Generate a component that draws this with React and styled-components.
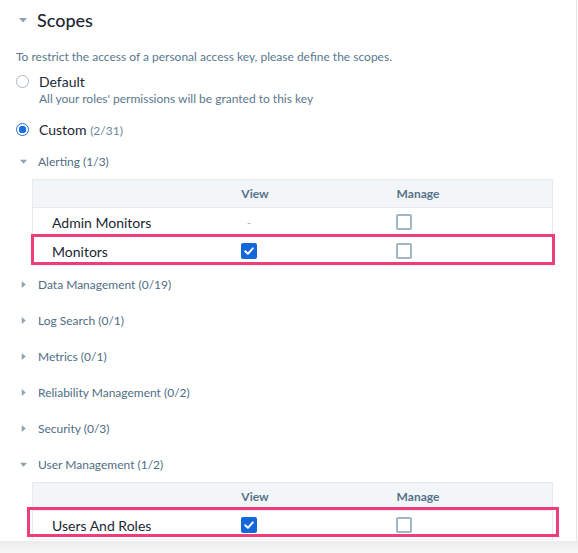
import React from "react";
import styled, { createGlobalStyle } from "styled-components";

const groups = [
  {
    name: "Alerting",
    count: "1/3",
    open: true,
    rows: [
      { name: "Admin Monitors", view: null, manage: false },
      { name: "Monitors", view: true, manage: false, marked: "a" },
    ],
  },
  { name: "Data Management", count: "0/19" },
  { name: "Log Search", count: "0/1" },
  { name: "Metrics", count: "0/1" },
  { name: "Reliability Management", count: "0/2" },
  { name: "Security", count: "0/3" },
  {
    name: "User Management",
    count: "1/2",
    open: true,
    rows: [{ name: "Users And Roles", view: true, manage: false, marked: "b" }],
  },
];

const Caret = ({ open, size = 7 }) => (
  <CaretBox>
    <svg width={size} height={size} viewBox="0 0 8 8">
      {open ? (
        <path d="M0 2 L8 2 L4 6.5 Z" fill="#8ea2b2" />
      ) : (
        <path d="M2 0 L6.5 4 L2 8 Z" fill="#8ea2b2" />
      )}
    </svg>
  </CaretBox>
);

const CheckBox = ({ checked }) =>
  checked ? (
    <Box checked>
      <svg width="12" height="12" viewBox="0 0 12 12">
        <path
          d="M2.2 6.2 L4.9 8.8 L9.8 3.4"
          stroke="#fff"
          strokeWidth="2"
          fill="none"
          strokeLinecap="round"
          strokeLinejoin="round"
        />
      </svg>
    </Box>
  ) : (
    <Box />
  );

const App = () => {
  return (
    <>
      <GlobalStyle />
      <Panel>
        <Title>
          <Caret open size={8} />
          <h2>Scopes</h2>
        </Title>
        <Description>
          To restrict the access of a personal access key, please define the
          scopes.
        </Description>

        <RadioRow>
          <Radio />
          <div>
            <RadioLabel>Default</RadioLabel>
            <RadioHint>All your roles' permissions will be granted to this key</RadioHint>
          </div>
        </RadioRow>
        <RadioRow custom>
          <Radio checked />
          <RadioLabel>
            Custom <Count>(2/31)</Count>
          </RadioLabel>
        </RadioRow>

        {groups.map((g) => (
          <React.Fragment key={g.name}>
            <GroupHeader>
              <Caret open={g.open} />
              <span>
                {g.name} ({g.count})
              </span>
            </GroupHeader>
            {g.open && (
              <Table>
                <HeadRow>
                  <span />
                  <HeadCell>View</HeadCell>
                  <HeadCell>Manage</HeadCell>
                  <span />
                </HeadRow>
                {g.rows.map((r) => (
                  <Row key={r.name} marked={r.marked}>
                    <NameCell>{r.name}</NameCell>
                    <Cell pad={12}>
                      {r.view === null ? <Dash>-</Dash> : <CheckBox checked={r.view} />}
                    </Cell>
                    <Cell pad={28}>
                      <CheckBox checked={r.manage} />
                    </Cell>
                    <span />
                  </Row>
                ))}
              </Table>
            )}
          </React.Fragment>
        ))}
      </Panel>
      <Footer />
    </>
  );
};

const GlobalStyle = createGlobalStyle`
  body {
    margin: 0;
    background: #fff;
    font-family: Lato, "Noto Sans", sans-serif;
  }
`;

const Panel = styled.div`
  width: 577px;
  height: 541px;
  box-sizing: border-box;
  padding-left: 16px;
  border-right: 1px solid #e6e6e6;
  overflow: hidden;
`;

const Title = styled.div`
  display: flex;
  align-items: center;
  height: 40px;
  padding-left: 3px;

  h2 {
    margin: 0 0 0 10px;
    font-size: 18px;
    font-weight: 500;
    color: #1c2733;
  }
`;

const CaretBox = styled.span`
  display: inline-flex;
  width: 8px;
  justify-content: center;
`;

const Description = styled.p`
  margin: 10px 0 0;
  font-size: 12px;
  line-height: 14px;
  color: #5a788f;
`;

const RadioRow = styled.div`
  display: flex;
  align-items: flex-start;
  gap: 10px;
  margin-top: ${(p) => (p.custom ? "15px" : "9px")};
  margin-bottom: ${(p) => (p.custom ? "4px" : "0")};
`;

const Radio = styled.span`
  flex: none;
  box-sizing: border-box;
  width: 13px;
  height: 13px;
  margin-top: 2px;
  border-radius: 50%;
  border: 1px solid ${(p) => (p.checked ? "#1b6fe0" : "#a8b8c5")};
  background: ${(p) =>
    p.checked ? "radial-gradient(circle, #1b6fe0 0 3.5px, #fff 4px)" : "#fff"};
`;

const RadioLabel = styled.div`
  font-size: 14px;
  line-height: 17px;
  color: #1c2733;
`;

const Count = styled.span`
  font-size: 12px;
  color: #6e879a;
`;

const RadioHint = styled.div`
  margin-top: 2px;
  font-size: 12px;
  line-height: 14px;
  color: #5a788f;
`;

const GroupHeader = styled.div`
  display: flex;
  align-items: center;
  gap: 11px;
  height: 36px;
  padding-left: 3px;
  font-size: 12px;
  color: #4f6d84;
`;

const Table = styled.div`
  margin-left: 16px;
  width: 519px;
  border: 1px solid #e6eaee;
  border-bottom: none;
`;

const grid = `
  display: grid;
  grid-template-columns: 142px 160px 166px 1fr;
  align-items: center;
`;

const HeadRow = styled.div`
  ${grid}
  height: 27px;
  background: #f3f6f9;
  border-bottom: 1px solid #e6eaee;
`;

const HeadCell = styled.span`
  text-align: center;
  font-size: 12px;
  font-weight: 700;
  color: #54728a;
`;

const Row = styled.div`
  ${grid}
  position: relative;
  height: 28px;
  border-bottom: 1px solid #eef1f4;

  &::after {
    content: "";
    display: ${(p) => (p.marked ? "block" : "none")};
    position: absolute;
    inset: ${(p) => (p.marked === "b" ? "-4px -7px 2px -6px" : "-3px -3px 0 -2px")};
    border: 3px solid #ee3d7b;
    pointer-events: none;
  }
`;

const NameCell = styled.span`
  padding-left: 19px;
  font-size: 14px;
  color: #1c2733;
`;

const Cell = styled.span`
  display: flex;
  justify-content: center;
  padding-right: ${(p) => p.pad}px;
`;

const Dash = styled.span`
  font-size: 12px;
  color: #a9bac8;
`;

const Box = styled.span`
  box-sizing: border-box;
  display: inline-flex;
  align-items: center;
  justify-content: center;
  width: 16px;
  height: 16px;
  border-radius: 2px;
  background: ${(p) => (p.checked ? "#1466db" : "#fff")};
  border: ${(p) => (p.checked ? "none" : "2px solid #a4b6c6")};
`;

const Footer = styled.div`
  height: 12px;
  background: linear-gradient(#ececec, #f7f7f7);
`;

export default App;
